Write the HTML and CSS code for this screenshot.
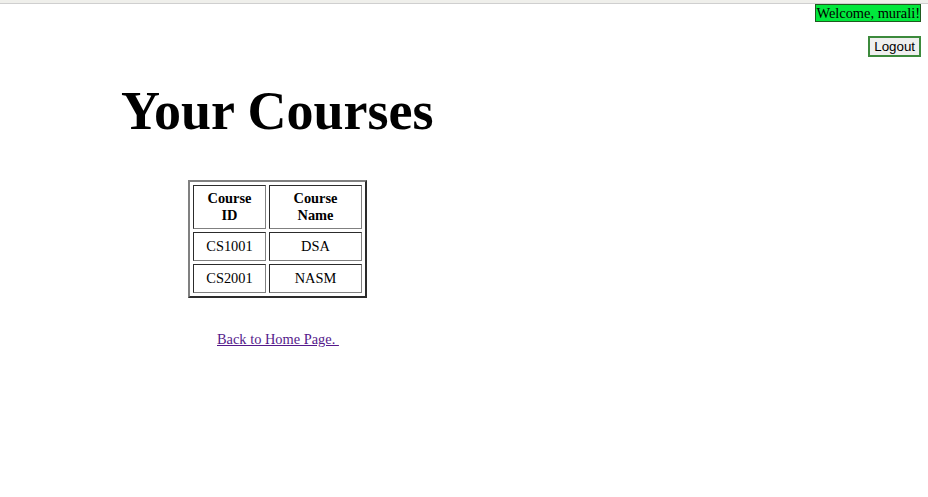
FILE: index.html
```html
<!DOCTYPE html>
<html>
<head>
<meta charset="utf-8">
<title>Your Courses</title>
<link rel="stylesheet" href="styles.css">
</head>
<body>
<div class="strip"></div>
<div class="header">
  <span class="welcome">Welcome, murali!</span>
  <button class="logout">Logout</button>
</div>
<h1 class="title">Your Courses</h1>
<table class="courses">
  <tr><th class="c1">Course ID</th><th class="c2">Course Name</th></tr>
  <tr><td>CS1001</td><td>DSA</td></tr>
  <tr><td>CS2001</td><td>NASM</td></tr>
</table>
<div class="back"><a class="home" href="#">Back to Home Page.&nbsp;</a></div>
</body>
</html>
```
FILE: styles.css
```css
html, body {
  margin: 0;
  padding: 0;
  background: #fff;
  font-family: "Liberation Serif", "Times New Roman", serif;
  font-size: 14.4px;
  color: #000;
}
.strip {
  height: 3px;
  background: #efefeb;
  border-bottom: 1px solid #cfcfcf;
}
.header {
  display: flex;
  flex-direction: column;
  align-items: flex-end;
  padding-right: 7px;
}
.welcome {
  background: #00e83c;
  border: 1px solid #1f5a1f;
  line-height: 16px;
  padding: 0;
}
.logout {
  margin-top: 14px;
  font-family: "Liberation Sans", Arial, sans-serif;
  font-size: 13.33px;
  background: #efefef;
  border: 2px solid #3c8a3c;
  padding: 1px 4px;
  color: #000;
}
.title {
  margin: 23px 0 0 121px;
  font-size: 54px;
  font-weight: bold;
}
.courses {
  margin: 38px 0 0 188px;
  border: 2px outset grey;
  border-spacing: 3px;
  font-size: 14.4px;
}
.courses th, .courses td {
  border: 1px inset grey;
  padding: 3px 10px;
  text-align: center;
}
.courses th { height: 36px; }
.courses td { height: 21px; }
.courses .c1 { width: 51px; }
.courses .c2 { width: 71px; }
.back {
  margin: 33px 0 0 217px;
}
.home {
  color: #551a8b;
  text-decoration: underline;
}
```
